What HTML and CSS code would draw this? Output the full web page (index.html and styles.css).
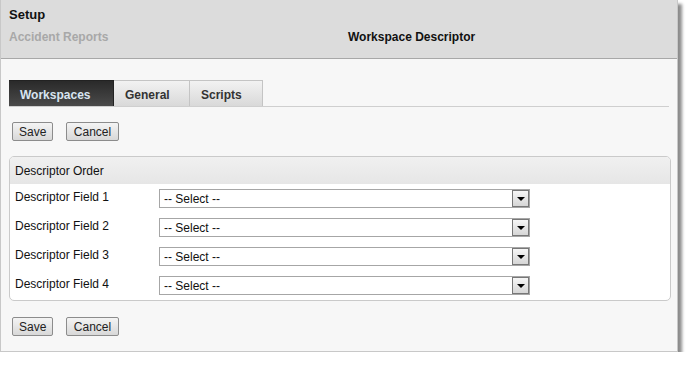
FILE: index.html
```html
<!DOCTYPE html>
<html lang="en">
  <head>
    <meta charset="utf-8" />
    <title>Setup - Workspace Descriptor</title>
    <link rel="stylesheet" href="styles.css">
  </head>
  <body>
    <div class="window">
      <div class="header">
        <div class="title">Setup</div>
        <div class="subrow">
          <span class="crumb">Accident Reports</span>
          <span class="page-title">Workspace Descriptor</span>
        </div>
      </div>
      <div class="content">
        <ul class="tabs">
          <li class="tab active">Workspaces</li>
          <li class="tab">General</li>
          <li class="tab">Scripts</li>
        </ul>
        <div class="toolbar">
          <button class="btn">Save</button>
          <button class="btn">Cancel</button>
        </div>
        <div class="panel">
          <div class="panel-head">Descriptor Order</div>
          <div class="panel-body">
            <div class="field">
              <label>Descriptor Field 1</label>
              <div class="select"><span>-- Select --</span><i class="arrow"></i></div>
            </div>
            <div class="field">
              <label>Descriptor Field 2</label>
              <div class="select"><span>-- Select --</span><i class="arrow"></i></div>
            </div>
            <div class="field">
              <label>Descriptor Field 3</label>
              <div class="select"><span>-- Select --</span><i class="arrow"></i></div>
            </div>
            <div class="field">
              <label>Descriptor Field 4</label>
              <div class="select"><span>-- Select --</span><i class="arrow"></i></div>
            </div>
          </div>
        </div>
        <div class="toolbar bottom">
          <button class="btn">Save</button>
          <button class="btn">Cancel</button>
        </div>
      </div>
    </div>
  </body>
</html>
```

FILE: styles.css
```css
body {
  margin: 0;
  background-color: #fff;
  font-family: "Liberation Sans", Arial, sans-serif;
  font-size: 12px;
  color: #111;
}
.window {
  width: 676px;
  height: 351px;
  border: 1px solid #c8c8c8;
  border-top: none;
  background-color: #f7f7f7;
  box-shadow: 4px 4px 3px rgba(0, 0, 0, 0.45);
}
.header {
  height: 59px;
  background-color: #dcdcdc;
  border-bottom: 1px solid #a8a8a8;
  padding: 0 8px;
  box-sizing: border-box;
}
.title {
  font-size: 13px;
  font-weight: bold;
  color: #111;
  padding-top: 7px;
  height: 17px;
}
.subrow {
  display: grid;
  grid-template-columns: 339px auto;
  padding-top: 6px;
  font-weight: bold;
}
.crumb {
  color: #a8a8a8;
}
.page-title {
  color: #111;
}
.content {
  padding: 21px 8px 0 8px;
}
.tabs {
  display: flex;
  list-style: none;
  margin: 0;
  padding: 0;
  border-bottom: 1px solid #cfcfcf;
  height: 26px;
}
.tab {
  height: 26px;
  box-sizing: border-box;
  padding: 7px 0 0 11px;
  font-weight: bold;
  color: #333;
  background: linear-gradient(#f2f2f2, #d9d9d9);
  border: 1px solid #c4c4c4;
  border-bottom: none;
  border-left: none;
}
.tab:nth-child(2) {
  width: 76px;
}
.tab:nth-child(3) {
  width: 73px;
}
.tab.active {
  width: 105px;
  background: linear-gradient(#2a2a2a, #4a4a4a);
  color: #d8e4f0;
  border-color: #222;
}
.toolbar {
  display: flex;
  gap: 13px;
  padding: 15px 0 0 3px;
  height: 19px;
}
.toolbar.bottom {
  padding-top: 16px;
}
.btn {
  font-family: inherit;
  font-size: 12px;
  color: #222;
  height: 19px;
  padding: 0 6px;
  border: 1px solid #8c8c8c;
  border-radius: 2px;
  background: linear-gradient(#f4f4f4, #d8d8d8);
}
.btn:first-child {
  width: 41px;
}
.btn:last-child {
  width: 53px;
}
.panel {
  margin-top: 15px;
  width: 660px;
  border: 1px solid #cacaca;
  border-radius: 5px;
  background-color: #fff;
  overflow: hidden;
}
.panel-head {
  height: 27px;
  box-sizing: border-box;
  padding: 7px 0 0 5px;
  background: linear-gradient(#f0f0f0, #e6e6e6);
}
.panel-body {
  padding: 5px 0 5px 5px;
  display: flex;
  flex-direction: column;
  gap: 10px;
}
.field {
  display: flex;
  align-items: flex-start;
  height: 19px;
}
.field label {
  width: 144px;
  padding-top: 1px;
}
.select {
  width: 371px;
  height: 19px;
  box-sizing: border-box;
  border: 1px solid #a6a6a6;
  background-color: #fff;
  display: flex;
  justify-content: space-between;
  align-items: center;
}
.select span {
  padding-left: 4px;
  color: #111;
}
.arrow {
  width: 17px;
  height: 17px;
  box-sizing: border-box;
  border: 1px solid #777;
  background: linear-gradient(#f6f6f6, #d6d6d6);
  position: relative;
}
.arrow::after {
  content: "";
  position: absolute;
  left: 4px;
  top: 6px;
  border-left: 4px solid transparent;
  border-right: 4px solid transparent;
  border-top: 4px solid #000;
}
```
